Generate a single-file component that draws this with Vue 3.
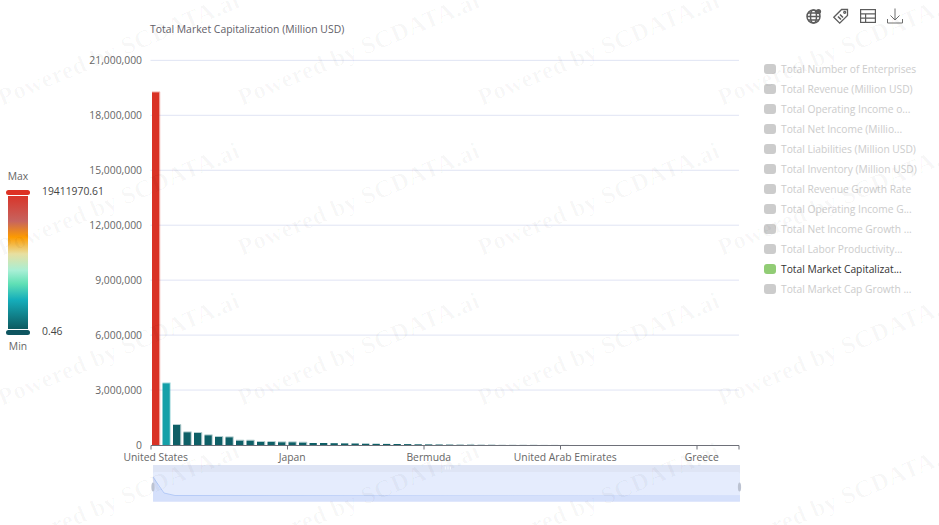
<script setup>
import { computed } from 'vue'

const plot = { left: 151, right: 739, zero: 445, band: 10.5, barW: 7.3 }

const yTicks = ['0', '3,000,000', '6,000,000', '9,000,000', '12,000,000', '15,000,000', '18,000,000', '21,000,000']
  .map((label, i) => ({ label, y: 445 - i * 54.95 }))

const xTicks = [
  { label: 'United States', i: 0 },
  { label: 'Japan', i: 13 },
  { label: 'Bermuda', i: 26 },
  { label: 'United Arab Emirates', i: 39 },
  { label: 'Greece', i: 52 }
].map(t => ({ ...t, x: plot.left + t.i * plot.band, cx: plot.left + t.i * plot.band + plot.band / 2 }))

const heights = [352.7, 61.7, 20, 12.7, 12, 9.7, 8, 7.7, 4.3, 4.3, 3, 3, 2.7, 2.7, 2.3, 2, 2, 1.8, 1.6, 1.5, 1.3, 1.2, 1.1, 1, 0.9, 0.7, 0.6, 0.5, 0.4, 0.3, 0.3, 0.2, 0.2, 0.1, 0.1, 0.1, 0.1, 0.05, 0.05, 0.05]

const bars = computed(() => heights.map((h, i) => ({
  x: 152 + i * plot.band,
  y: plot.zero - h,
  h,
  fill: i === 0 ? '#d93225' : i === 1 ? '#15a0a8' : '#0e5f66'
})))

const legend = [
  { name: 'Total Number of Enterprises' },
  { name: 'Total Revenue (Million USD)' },
  { name: 'Total Operating Income o...' },
  { name: 'Total Net Income (Millio...' },
  { name: 'Total Liabilities (Million USD)' },
  { name: 'Total Inventory (Million USD)' },
  { name: 'Total Revenue Growth Rate' },
  { name: 'Total Operating Income G...' },
  { name: 'Total Net Income Growth ...' },
  { name: 'Total Labor Productivity...' },
  { name: 'Total Market Capitalizat...', on: true },
  { name: 'Total Market Cap Growth ...' }
]

const marks = computed(() => {
  const out = []
  for (let r = 0; r < 4; r++) {
    for (let c = 0; c < 4; c++) {
      out.push({ x: 2 + c * 240, y: 106 + r * 150 })
    }
  }
  return out
})
</script>

<template>
  <div class="page">
    <aside class="range">
      <span class="range-cap">Max</span>
      <div class="range-track">
        <div class="range-bar"></div>
        <i class="range-knob top"></i>
        <i class="range-knob bottom"></i>
        <span class="range-val top">19411970.61</span>
        <span class="range-val bottom">0.46</span>
      </div>
      <span class="range-cap">Min</span>
    </aside>

    <svg class="chart" width="939" height="525" viewBox="0 0 939 525">
      <defs>
        <linearGradient id="zoomLine" x1="153" x2="740" y1="0" y2="0" gradientUnits="userSpaceOnUse">
          <stop offset="0" stop-color="#a9c2f5" />
          <stop offset="0.45" stop-color="#c3d4f9" />
          <stop offset="1" stop-color="#d5e0fb" />
        </linearGradient>
      </defs>
      <text class="axis-name" x="150" y="33">Total Market Capitalization (Million USD)</text>

      <g v-for="t in yTicks" :key="t.label">
        <line v-if="t.label !== '0'" x1="150.5" x2="739" :y1="t.y" :y2="t.y" class="grid" />
        <text class="tick" x="142" :y="t.y + 3.5" text-anchor="end">{{ t.label }}</text>
      </g>

      <g v-for="(b, i) in bars" :key="i">
        <rect :x="b.x" :y="b.y" width="7.3" :height="b.h" :fill="b.fill" />
        <path v-if="b.h > 2" :d="`M${b.x} ${b.y - .5}H${b.x + 7.8}V445`" fill="none" :stroke="b.fill" stroke-opacity=".3" />
      </g>

      <path class="axis" d="M151 449.5V445.5H739V449.5" />
      <g v-for="t in xTicks" :key="t.label">
        <line v-if="t.i" :x1="t.x" :x2="t.x" y1="445.5" y2="449.5" class="axis" />
        <text class="tick" :x="t.cx - .5" y="461" text-anchor="middle">{{ t.label }}</text>
      </g>

      <!-- data zoom -->
      <rect x="153" y="465" width="587" height="36.5" fill="#dfe5f5" />
      <rect x="153" y="472" width="587" height="29.5" rx="2" fill="#e5ecfd" />
      <path d="M153 477L164 493L175 495.5H740V501.5H153Z" fill="#d5e0fb" />
      <path d="M153 477L164 493L175 495.5H740" fill="none" stroke="url(#zoomLine)" stroke-width=".8" />
      <path d="M445.5 466.5v3M448 466.5v3M450.5 466.5v3" stroke="#f4f6fc" stroke-width="1.2" />
      <ellipse cx="153" cy="487" rx="1.6" ry="4.5" fill="#bcc3d2" />
      <ellipse cx="739.5" cy="487" rx="1.6" ry="4.5" fill="#bcc3d2" />
    </svg>

    <aside class="side">
      <div class="tools">
        <svg viewBox="0 0 18 18" width="18" height="18" fill="none" stroke="#5c5c5c" stroke-width="1.5">
          <circle cx="8.5" cy="9.5" r="6.5" />
          <ellipse cx="8.5" cy="9.5" rx="3" ry="6.5" />
          <path d="M2 9.5h13M3 6h11M3 13h11" />
          <circle cx="13.5" cy="4.5" r="2.6" fill="#5c5c5c" stroke="none" />
        </svg>
        <svg viewBox="0 0 18 18" width="18" height="18" fill="none" stroke="#5c5c5c" stroke-width="1.3">
          <path d="M1.8 10.3 9.6 2.5H15.5V8.4L7.7 16.2Z" />
          <circle cx="12.7" cy="5.3" r="1" />
          <path d="M6 9.5 9 12.5M8 7.5 11 10.5" stroke-width="1.6" />
        </svg>
        <svg viewBox="0 0 18 18" width="18" height="18" fill="none" stroke="#5c5c5c" stroke-width="1.2">
          <rect x="1.6" y="2.6" width="14.8" height="12.8" />
          <path d="M1.6 6.9H16.4M1.6 11.1H16.4M6.6 6.9V15.4" />
        </svg>
        <svg viewBox="0 0 18 18" width="18" height="18" fill="none" stroke="#6e6e6e" stroke-width="1">
          <path d="M1.5 12V16H16.5V12M9 1.5V13M4.5 8.5 9 13 13.5 8.5" />
        </svg>
      </div>
      <ul class="legend">
        <li v-for="l in legend" :key="l.name" :class="{ on: l.on }">
          <i></i><span>{{ l.name }}</span>
        </li>
      </ul>
    </aside>

    <svg class="marks" width="939" height="525" viewBox="0 0 939 525">
      <text v-for="(m, i) in marks" :key="i" :transform="`translate(${m.x} ${m.y}) rotate(-22.5)`">Powered by SCDATA.ai</text>
    </svg>
  </div>
</template>

<style scoped>
.page {
  position: relative;
  width: 939px;
  height: 525px;
  overflow: hidden;
  background: #fff;
  font-family: "Open Sans", "Noto Sans", sans-serif;
  color: #666;
}
.chart {
  position: absolute;
  left: 0;
  top: 0;
}
.axis-name {
  font-size: 10.4px;
  fill: #5f6068;
}
.tick {
  font-size: 10.35px;
  fill: #666;
}
.grid {
  stroke: #e0e4f4;
  stroke-width: 1;
}
.axis {
  fill: none;
  stroke: #6e7079;
  stroke-width: 1;
}
.range {
  position: absolute;
  left: 0;
  top: 169px;
  width: 36px;
  display: flex;
  flex-direction: column;
  align-items: center;
  font-size: 10.35px;
}
.range-cap {
  line-height: 14px;
  color: #666;
}
.range-track {
  position: relative;
  width: 20px;
  height: 145px;
  margin: 7px 0 4px;
  padding: 6px 0;
  box-sizing: border-box;
}
.range-bar {
  height: 100%;
  background: linear-gradient(to bottom, #d8352a 0%, #c7645f 19%, #fd9b00 31%, #e8dfa0 43.5%, #a8efd5 56%, #60e0b5 66%, #15aebb 78%, #0d5a60 100%);
}
.range-knob {
  position: absolute;
  left: -2px;
  width: 24px;
  height: 5px;
  border-radius: 3px;
}
.range-knob.top {
  top: 0;
  background: #dd3124;
}
.range-knob.bottom {
  bottom: 0;
  background: #0e5560;
}
.range-val {
  position: absolute;
  left: 34px;
  line-height: 14px;
  color: #444;
  white-space: nowrap;
}
.range-val.top {
  top: -6px;
}
.range-val.bottom {
  bottom: -3px;
}
.side {
  position: absolute;
  top: 0;
  left: 764px;
  right: 0;
}
.tools {
  display: flex;
  gap: 9px;
  margin: 7px 0 0 41px;
}
.legend {
  list-style: none;
  margin: 37px 0 0;
  padding: 0;
  display: flex;
  flex-direction: column;
  gap: 6px;
}
.legend li {
  display: flex;
  align-items: center;
  gap: 5px;
  height: 14px;
  font-size: 10.25px;
  color: #ccc;
  white-space: nowrap;
}
.legend i {
  width: 12px;
  height: 10px;
  border-radius: 3px;
  background: #ccc;
  flex: none;
}
.legend li.on {
  color: #333;
}
.legend li.on i {
  background: #91cc75;
}
.marks {
  position: absolute;
  left: 0;
  top: 0;
  pointer-events: none;
}
.marks text {
  font-family: "Liberation Serif", serif;
  font-weight: 700;
  font-size: 24.5px;
  letter-spacing: 0.4px;
  fill: #000;
  fill-opacity: 0.03;
}
</style>
